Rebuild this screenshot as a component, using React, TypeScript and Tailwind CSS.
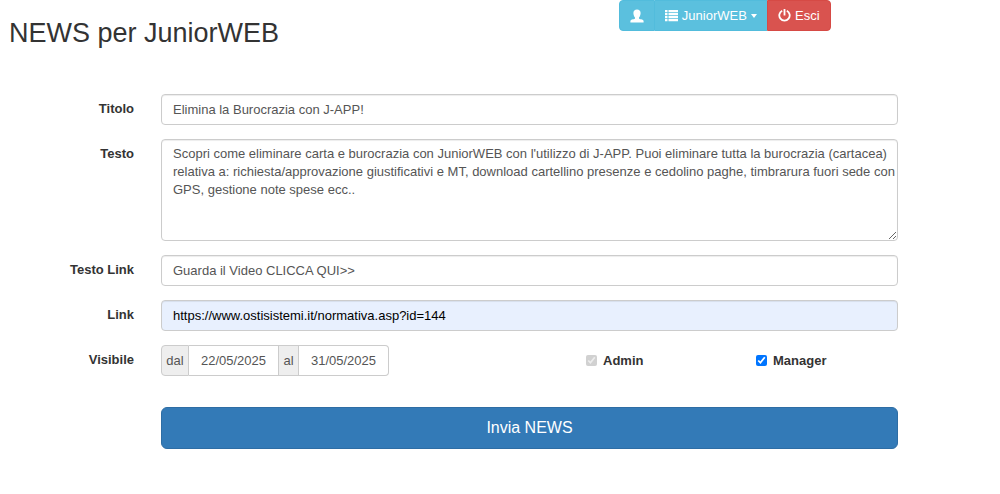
import { useState } from "react";
import type { ReactNode } from "react";

const inputClass =
  "block w-full rounded border border-[#ccc] pl-[11px] text-[13px] shadow-[inset_0_1px_1px_rgba(0,0,0,0.075)] outline-none focus:border-[#66afe9]";

const dateClass =
  "h-full border-y border-r border-[#ccc] bg-white text-center text-[13px] text-[#555] outline-none";

const addonClass =
  "flex h-full items-center justify-center border-y border-[#ccc] bg-[#eee] text-[13px] text-[#555]";

function UserIcon() {
  return (
    <svg viewBox="0 0 14 14" className="size-[14px]" fill="currentColor" aria-hidden="true">
      <path d="M7 .5c2.200 0 3.600 1.200 3.600 3.500 0 1.900-.7 3.500-1.600 4.500v.9c.1.300.9.600 2 .9 1.600.5 2.600.9 2.600 2v1.200H.4v-1.200c0-1.100 1-1.500 2.600-2 1.100-.3 1.900-.6 2-.9v-.9C4.100 7.500 3.400 5.900 3.400 4 3.400 1.700 4.800.5 7 .5z" />
    </svg>
  );
}

function ListIcon() {
  return (
    <svg viewBox="0 0 13 13" className="size-[13px]" fill="currentColor" aria-hidden="true">
      <path d="M0 1h2.500v2.300H0zM3.500 1H13v2.300H3.500zM0 4h2.500v2.300H0zM3.500 4H13v2.300H3.500zM0 7h2.500v2.300H0zM3.500 7H13v2.300H3.500zM0 10h2.500v2.300H0zM3.500 10H13v2.300H3.500z" />
    </svg>
  );
}

function PowerIcon() {
  return (
    <svg
      viewBox="0 0 13 13"
      className="size-[13px]"
      fill="none"
      stroke="currentColor"
      strokeWidth="1.800"
      aria-hidden="true"
    >
      <path d="M4.200 1.700a5.200 5.200 0 1 0 4.600 0" />
      <path d="M6.500 0v6.500" />
    </svg>
  );
}

function Row({ label, htmlFor, children }: { label: string; htmlFor: string; children: ReactNode }) {
  return (
    <div className="grid grid-cols-[134px_1fr] gap-x-[27px]">
      <label htmlFor={htmlFor} className="pt-[5px] text-right font-bold leading-5">
        {label}
      </label>
      <div className="min-w-0">{children}</div>
    </div>
  );
}

export default function App() {
  const [manager, setManager] = useState(true);

  return (
    <main className="bg-white font-['Liberation_Sans',Arial,sans-serif] text-[13px] text-[#333]">
      <header className="grid grid-cols-[8fr_5fr] items-start pl-[9px]">
        <h1 className="pt-[17px] text-[27px] leading-8">NEWS per JuniorWEB</h1>
        <nav className="flex h-[31px] text-white">
          <button
            type="button"
            aria-label="Utente"
            className="flex w-9 items-center justify-center rounded-l border border-[#52bcdc] bg-[#5bc0de]"
          >
            <UserIcon />
          </button>
          <button
            type="button"
            className="flex w-28 items-center justify-center gap-1 border-y border-[#52bcdc] bg-[#5bc0de]"
          >
            <ListIcon />
            JuniorWEB
            <span className="border-x-[3px] border-t-4 border-x-transparent border-t-white" />
          </button>
          <a
            href="#esci"
            className="flex w-16 items-center justify-center gap-1 rounded-r border border-[#d64a45] bg-[#d9534f]"
          >
            <PowerIcon />
            Esci
          </a>
        </nav>
      </header>

      <form
        className="flex flex-col gap-[14px] pt-[45px] pr-[102px]"
        onSubmit={(e) => e.preventDefault()}
      >
        <Row label="Titolo" htmlFor="titolo">
          <input
            id="titolo"
            type="text"
            defaultValue="Elimina la Burocrazia con J-APP!"
            className={`${inputClass} h-[31px] bg-white text-[#555]`}
          />
        </Row>
        <Row label="Testo" htmlFor="testo">
          <textarea
            id="testo"
            defaultValue="Scopri come eliminare carta e burocrazia con JuniorWEB con l'utilizzo di J-APP. Puoi eliminare tutta la burocrazia (cartacea) relativa a: richiesta/approvazione giustificativi e MT, download cartellino presenze e cedolino paghe, timbrarura fuori sede con GPS, gestione note spese ecc.."
            className={`${inputClass} h-[102px] resize-y bg-white py-[5px] leading-[18px] text-[#555]`}
          />
        </Row>
        <Row label="Testo Link" htmlFor="testo-link">
          <input
            id="testo-link"
            type="text"
            defaultValue="Guarda il Video CLICCA QUI>>"
            className={`${inputClass} h-[31px] bg-white text-[#555]`}
          />
        </Row>
        <Row label="Link" htmlFor="link">
          <input
            id="link"
            type="url"
            defaultValue="https://www.ostisistemi.it/normativa.asp?id=144"
            className={`${inputClass} h-[31px] bg-[#e8f0fe] text-black`}
          />
        </Row>
        <Row label="Visibile" htmlFor="dal">
          <div className="grid grid-cols-[425fr_170fr_142fr] items-center">
            <div className="flex h-[31px]">
              <label htmlFor="dal" className={`${addonClass} w-7 rounded-l border-x`}>
                dal
              </label>
              <input
                id="dal"
                type="text"
                defaultValue="22/05/2025"
                className={`${dateClass} w-[90px]`}
              />
              <label htmlFor="al" className={`${addonClass} w-5 border-r`}>
                al
              </label>
              <input
                id="al"
                type="text"
                defaultValue="31/05/2025"
                className={`${dateClass} w-[90px] rounded-r`}
              />
            </div>
            <label className="flex items-center gap-[6px] font-bold">
              <input type="checkbox" checked disabled readOnly className="size-[11px]" />
              Admin
            </label>
            <label className="flex items-center gap-[6px] font-bold">
              <input
                type="checkbox"
                checked={manager}
                onChange={(e) => setManager(e.target.checked)}
                className="size-[11px]"
              />
              Manager
            </label>
          </div>
        </Row>
        <div className="grid grid-cols-[134px_1fr] gap-x-[27px] pt-[17px]">
          <button
            type="submit"
            className="col-start-2 h-[42px] rounded-md border border-[#2e6da4] bg-[#337ab7] text-base text-white"
          >
            Invia NEWS
          </button>
        </div>
      </form>
    </main>
  );
}
